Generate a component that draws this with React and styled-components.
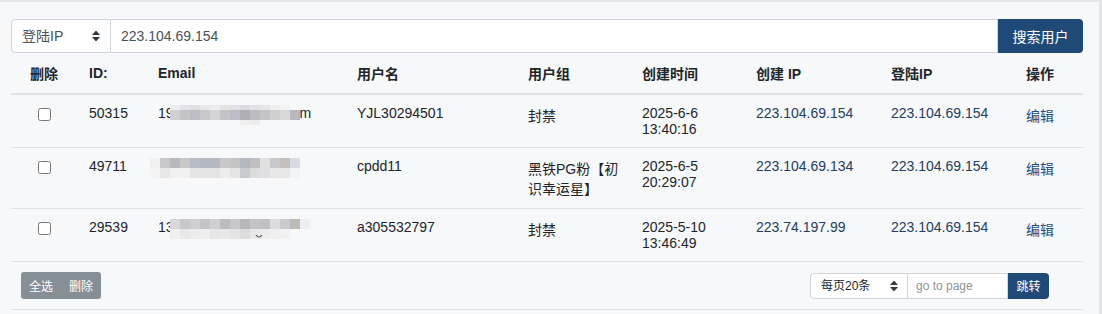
import React from "react";
import styled, { createGlobalStyle } from "styled-components";

const GlobalStyle = createGlobalStyle`
  html, body { margin: 0; padding: 0; background: #f7f8fa; }
  body {
    font-family: "Liberation Sans", Arial, "Noto Sans CJK SC", sans-serif;
    font-size: 14px;
    color: #212529;
  }
  * { box-sizing: border-box; }
`;

const Page = styled.div`
  background: #f7f8fa;
  border-top: 2px solid #e4e5e9;
  border-right: 3px solid #e4e5e9;
  padding: 17px 16px 2px 11px;
  min-height: 314px;
`;

const SearchBar = styled.div`
  display: flex;
  height: 34px;
`;

const SelectWrap = styled.div`
  position: relative;
  width: ${(p) => p.$w}px;
  height: 100%;
  flex: none;
`;

const Select = styled.select`
  appearance: none;
  -webkit-appearance: none;
  width: 100%;
  height: 100%;
  margin: 0;
  border: 1px solid #ced4da;
  border-radius: 4px 0 0 4px;
  background: #fff;
  color: ${(p) => (p.$small ? "#212529" : "#495057")};
  font-family: inherit;
  font-size: ${(p) => (p.$small ? 12 : 14)}px;
  padding: 0 0 0 ${(p) => (p.$small ? 10 : 10)}px;
  outline: none;
`;

const Caret = styled.svg`
  position: absolute;
  right: ${(p) => p.$right}px;
  top: 50%;
  transform: translateY(-50%);
  pointer-events: none;
`;

const SearchInput = styled.input`
  flex: 1;
  min-width: 0;
  height: 100%;
  margin: 0;
  border: 1px solid #ced4da;
  border-left: none;
  background: #fff;
  color: #495057;
  font-family: inherit;
  font-size: 14px;
  padding: 0 10px;
  outline: none;
`;

const PrimaryButton = styled.button`
  flex: none;
  width: ${(p) => p.$w}px;
  height: 100%;
  margin: 0;
  border: none;
  border-radius: 0 4px 4px 0;
  background: #1f4a78;
  color: #fff;
  font-family: inherit;
  font-size: ${(p) => p.$fs}px;
  padding: 0;
  cursor: pointer;
`;

const Table = styled.table`
  width: 100%;
  border-collapse: collapse;
  table-layout: fixed;
`;

const Th = styled.th`
  font-weight: bold;
  text-align: ${(p) => (p.$center ? "center" : "left")};
  padding: 10px 12px;
  border-bottom: 2px solid #dee2e6;
  color: #212529;
  white-space: nowrap;
`;

const Td = styled.td`
  text-align: ${(p) => (p.$center ? "center" : "left")};
  vertical-align: top;
  padding: 10px ${(p) => p.$pr ?? 12}px 10px 12px;
  border-bottom: 1px solid #dee2e6;
  color: ${(p) => p.$color || "#212529"};
`;

const Check = styled.input`
  margin: 3px 3px 3px 4px;
`;

const EmailText = styled.span`
  white-space: nowrap;
`;

const Mosaic = styled.svg`
  display: inline-block;
  vertical-align: top;
  margin-left: ${(p) => p.$ml}px;
`;

const EditLink = styled.a`
  color: #1f4f82;
  text-decoration: none;
`;

const Footer = styled.div`
  display: flex;
  justify-content: space-between;
  align-items: center;
  padding: 10px 34px 10px 10px;
  border-bottom: 1px solid #dee2e6;
`;

const BtnGroup = styled.div`
  display: flex;
  height: 27px;
  background: #868e96;
  border-radius: 3px;
  overflow: hidden;
`;

const GrayButton = styled.button`
  border: none;
  background: transparent;
  color: #fff;
  font-family: inherit;
  font-size: 12px;
  padding: 0 8px;
  margin: 0;
  cursor: pointer;
`;

const Pager = styled.div`
  display: flex;
  height: 26px;
`;

const PageInput = styled.input`
  width: 100px;
  height: 100%;
  margin: 0;
  border: 1px solid #ced4da;
  border-left: none;
  background: #fff;
  font-family: inherit;
  font-size: 12px;
  color: #495057;
  padding: 0 8px;
  outline: none;
  &::placeholder { color: #8d9399; }
`;

function UpDown({ right }) {
  return (
    <Caret $right={right} width="8" height="11" viewBox="0 0 8 11">
      <path d="M4 0 L8 4.5 H0 Z" fill="#343a40" />
      <path d="M4 11 L8 6.5 H0 Z" fill="#343a40" />
    </Caret>
  );
}

const mosaics = {
  a: {
    w: 130,
    rows: [
      ["#ececee", "#e4e4e6", "#e0e0e2", "#e8e8ea", "#ececee", "#e4e4e4", "#e2e2e6", "#dcdce0", "#e2e2e4", "#e6e6e8", "#eeeeee", "#f2f2f2", "none"],
      ["#d0d0d4", "#c4c4c8", "#bcbcc4", "#c8c8cc", "#d4d4d6", "#c4c4c4", "#bcbcc4", "#b0b0b4", "#bcbcc0", "#c4c4c8", "#d0d0d0", "#d8d8da", "#b8b8c0"],
      ["none", "none", "none", "none", "none", "none", "none", "#efefef", "#ececec", "none", "none", "none", "none"],
    ],
    heights: [5, 10, 5],
  },
  b: {
    w: 150,
    rows: [
      ["#f0f0f0", "#c8c8cc", "#b8b8be", "#c8c8c8", "#b8bcc4", "#b4b8c0", "#b4b8c0", "#c8c8cc", "#c4c4c4", "#b4b8c0", "#c0c0c4", "#e0e0e0", "#c8c8cc", "#c4c0bc", "#d8dce0"],
      ["#f4f4f4", "#e8e8e8", "#f0f0f0", "#f0f0f0", "#e4e4e4", "#e4e4e4", "#e4e4e4", "#ececec", "#e4e4e4", "#c8ccd0", "#dcdcdc", "#e0e0e4", "#e8e8e8", "#e8e8e8", "#f0f4f8"],
    ],
    heights: [10, 10],
  },
  c: {
    w: 150,
    rows: [
      ["#d8d8dc", "#c8c8cc", "#cfcfd2", "#c4c4c8", "#d0d0d4", "#bcbcc0", "#c8c8cc", "#b8b8bc", "#c4c4c8", "#c0c0c4", "#dcdcde", "#cbcbcf", "#bdbbb8", "#eaf0f6", "none"],
      ["#f0f0f0", "#e8e8e8", "#ececec", "#eeeeee", "#e6e6e6", "#e8e8e8", "#e4e4e4", "#dcdcdc", "#e8e8e8", "#ececec", "#f0f0f0", "#f2f2f2", "none", "none", "none"],
    ],
    heights: [10, 10],
  },
};

function Blur({ kind, ml }) {
  const m = mosaics[kind];
  const total = m.heights.reduce((a, b) => a + b, 0);
  let y = 0;
  return (
    <Mosaic $ml={ml} width={m.w} height={total} viewBox={`0 0 ${m.w} ${total}`}>
      {m.rows.map((row, ri) => {
        const h = m.heights[ri];
        const y0 = y;
        y += h;
        return row.map((c, ci) =>
          c === "none" ? null : (
            <rect key={`${ri}-${ci}`} x={ci * 10} y={y0} width="10" height={h} fill={c} />
          )
        );
      })}
      {kind === "c" && <path d="M86 16 q3 4 6 0" stroke="#555" strokeWidth="1.2" fill="none" />}
    </Mosaic>
  );
}

const rows = [
  { id: "50315", pre: "19", blur: "a", ml: -4, post: "m", name: "YJL30294501", group: "封禁", date: "2025-6-6", time: "13:40:16", cip: "223.104.69.154", lip: "223.104.69.154" },
  { id: "49711", pre: "", blur: "b", ml: -8, post: "", name: "cpdd11", group: "黑铁PG粉【初识幸运星】", date: "2025-6-5", time: "20:29:07", cip: "223.104.69.134", lip: "223.104.69.154" },
  { id: "29539", pre: "13", blur: "c", ml: -4, post: "", name: "a305532797", group: "封禁", date: "2025-5-10", time: "13:46:49", cip: "223.74.197.99", lip: "223.104.69.154" },
];

const widths = [66, 69, 199, 171, 114, 114, 135, 135, 69];

export default function App() {
  return (
    <>
      <GlobalStyle />
      <Page>
        <SearchBar>
          <SelectWrap $w={100}>
            <Select defaultValue="login">
              <option value="login">登陆IP</option>
              <option value="reg">创建IP</option>
            </Select>
            <UpDown right={11} />
          </SelectWrap>
          <SearchInput defaultValue="223.104.69.154" />
          <PrimaryButton $w={85} $fs={14}>搜索用户</PrimaryButton>
        </SearchBar>

        <Table>
          <colgroup>
            {widths.map((w, i) => (
              <col key={i} style={{ width: w }} />
            ))}
          </colgroup>
          <thead>
            <tr>
              <Th $center>删除</Th>
              <Th>ID:</Th>
              <Th>Email</Th>
              <Th>用户名</Th>
              <Th>用户组</Th>
              <Th>创建时间</Th>
              <Th>创建 IP</Th>
              <Th>登陆IP</Th>
              <Th>操作</Th>
            </tr>
          </thead>
          <tbody>
            {rows.map((r) => (
              <tr key={r.id}>
                <Td $center>
                  <Check type="checkbox" />
                </Td>
                <Td>{r.id}</Td>
                <Td>
                  <EmailText>
                    {r.pre}
                    <Blur kind={r.blur} ml={r.pre ? r.ml : r.ml} />
                    {r.post}
                  </EmailText>
                </Td>
                <Td>{r.name}</Td>
                <Td $pr={8}>{r.group}</Td>
                <Td>
                  {r.date}
                  <br />
                  {r.time}
                </Td>
                <Td $color="#243d60">{r.cip}</Td>
                <Td $color="#243d60">{r.lip}</Td>
                <Td>
                  <EditLink href="#">编辑</EditLink>
                </Td>
              </tr>
            ))}
          </tbody>
        </Table>

        <Footer>
          <BtnGroup>
            <GrayButton>全选</GrayButton>
            <GrayButton>删除</GrayButton>
          </BtnGroup>
          <Pager>
            <SelectWrap $w={98}>
              <Select $small defaultValue="20">
                <option value="20">每页20条</option>
                <option value="50">每页50条</option>
              </Select>
              <UpDown right={10} />
            </SelectWrap>
            <PageInput placeholder="go to page" />
            <PrimaryButton $w={41} $fs={12}>跳转</PrimaryButton>
          </Pager>
        </Footer>
      </Page>
    </>
  );
}
